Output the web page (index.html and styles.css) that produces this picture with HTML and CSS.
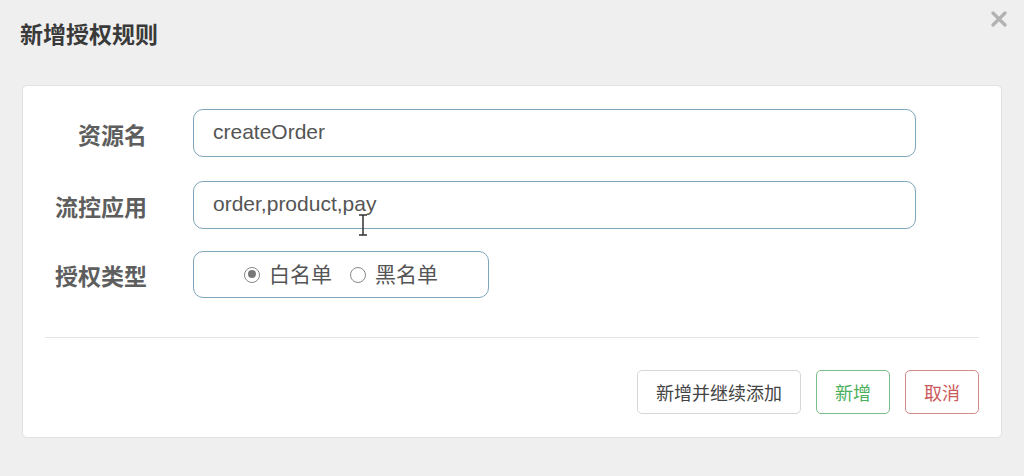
FILE: index.html
```html
<!DOCTYPE html>
<html lang="zh-CN">
<head>
  <meta charset="UTF-8">
  <meta name="viewport" content="width=device-width, initial-scale=1.0">
  <title>新增授权规则</title>
  <link rel="stylesheet" href="styles.css">
</head>
<body>
  <div class="dialog">
    <div class="dialog-header">
      <h2 class="dialog-title">新增授权规则</h2>
      <span class="close-btn">
        <svg width="16" height="16" viewBox="0 0 16 16">
          <path d="M2 2 L14 14 M14 2 L2 14" stroke="#b2b2b2" stroke-width="3.2" stroke-linecap="round"/>
        </svg>
      </span>
    </div>

    <div class="card">
      <div class="form-row">
        <label class="form-label">资源名</label>
        <div class="form-field">
          <input class="text-input" type="text" value="createOrder">
        </div>
      </div>
      <div class="form-row">
        <label class="form-label">流控应用</label>
        <div class="form-field cursor-holder">
          <input class="text-input" type="text" value="order,product,pay">
          <!-- mouse pointer caught in the shot -->
          <svg class="ibeam" width="10" height="22" viewBox="0 0 10 22">
            <path d="M1 1 H9 M5 1 V21 M1 21 H9" stroke="#333" stroke-width="1.5" fill="none"/>
          </svg>
        </div>
      </div>
      <div class="form-row">
        <label class="form-label">授权类型</label>
        <div class="radio-box">
          <span class="radio-item"><span class="radio checked"></span>白名单</span>
          <span class="radio-item"><span class="radio"></span>黑名单</span>
        </div>
      </div>

      <div class="divider"></div>

      <div class="actions">
        <button class="btn btn-default">新增并继续添加</button>
        <button class="btn btn-success">新增</button>
        <button class="btn btn-danger">取消</button>
      </div>
    </div>
  </div>
</body>
</html>
```

FILE: styles.css
```css
body {
  margin: 0;
  background-color: #efefef;
  font-family: "Liberation Sans", "Noto Sans CJK SC", sans-serif;
  color: #555;
}
.dialog {
  height: 476px;
  box-sizing: border-box;
  padding: 0 22px;
}
.dialog-header {
  height: 85px;
  display: flex;
  justify-content: space-between;
  align-items: flex-start;
}
.dialog-title {
  margin: 22px 0 0 -2px;
  font-size: 23px;
  line-height: 26px;
  font-weight: bold;
  color: #3a3a3a;
}
.close-btn {
  margin: 11px -5px 0 0;
  display: block;
}
.card {
  background: #fff;
  border: 1px solid #e2e2e2;
  border-radius: 5px;
  padding: 23px 22px 23px 22px;
}
.form-row {
  display: flex;
  align-items: center;
  margin-bottom: 24px;
}
.form-row + .form-row + .form-row {
  margin-top: -2px;
}
.form-label {
  width: 102px;
  margin-right: 46px;
  padding-top: 5px;
  text-align: right;
  font-size: 23px;
  line-height: 30px;
  font-weight: bold;
  color: #5e5e5e;
}
.form-field {
  width: 723px;
}
.cursor-holder {
  position: relative;
}
.ibeam {
  position: absolute;
  left: 165px;
  top: 33px;
}
.text-input {
  display: block;
  width: 100%;
  box-sizing: border-box;
  height: 48px;
  padding: 0 19px 2px;
  border: 1.5px solid #7ea5ba;
  border-radius: 10px;
  font-family: "Liberation Sans", "Noto Sans CJK SC", sans-serif;
  font-size: 21px;
  color: #555;
  background: #fff;
  outline: none;
}
.radio-box {
  width: 296px;
  height: 47px;
  box-sizing: border-box;
  border: 1.5px solid #7ea5ba;
  border-radius: 10px;
  display: flex;
  align-items: center;
  padding-left: 50px;
  gap: 18px;
  font-size: 21px;
  color: #555;
}
.radio-item {
  display: flex;
  align-items: center;
  line-height: 24px;
}
.radio {
  width: 16px;
  height: 16px;
  border: 1.5px solid #888;
  border-radius: 50%;
  margin-right: 9px;
  box-sizing: border-box;
  position: relative;
}
.radio.checked::after {
  content: "";
  position: absolute;
  left: 2.5px;
  top: 2.5px;
  width: 8px;
  height: 8px;
  border-radius: 50%;
  background: #777;
}
.divider {
  height: 1px;
  background: #e4e4e4;
  margin-top: 39px;
}
.actions {
  display: flex;
  justify-content: flex-end;
  gap: 15px;
  margin-top: 32px;
}
.btn {
  height: 44px;
  padding: 0 18px;
  background: #fff;
  border-radius: 5px;
  font-family: "Liberation Sans", "Noto Sans CJK SC", sans-serif;
  font-size: 18px;
  cursor: pointer;
}
.btn-default {
  border: 1px solid #d6d6d6;
  color: #444;
}
.btn-success {
  border: 1.5px solid #79bd8a;
  color: #4caf5c;
}
.btn-danger {
  border: 1.5px solid #d38a8c;
  color: #cc5a5a;
}
```
